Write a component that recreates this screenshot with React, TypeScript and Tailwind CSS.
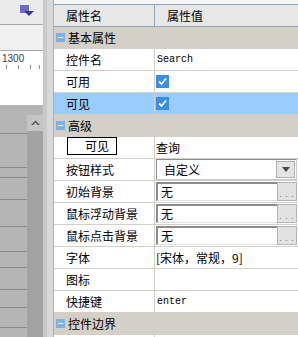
import { ReactNode } from "react";

const cjk = { fontFamily: '"Noto Sans CJK SC", "Liberation Sans", sans-serif' };

function Check() {
  return (
    <div className="w-[13px] h-[13px] bg-[#3c8de6] flex items-center justify-center">
      <svg width="11" height="11" viewBox="0 0 11 11">
        <path d="M2 5.5 L4.5 8 L9 2.5" stroke="white" strokeWidth="1.8" fill="none" />
      </svg>
    </div>
  );
}

function Row({ name, children, selected }: { name: ReactNode; children?: ReactNode; selected?: boolean }) {
  return (
    <div className={selected ? "flex h-[22px] border-b border-[#d4d0c8] bg-[#99ccff]" : "flex h-[22px] border-b border-[#d4d0c8] bg-white"}>
      <div className="w-[101px] shrink-0 flex items-center pl-[12px] border-r border-[#d4d0c8] text-[12px] text-black">
        {name}
      </div>
      <div className="flex-1 flex items-center pl-[1px] text-[12px] text-black">{children}</div>
    </div>
  );
}

function Category({ title }: { title: string }) {
  return (
    <div className="flex h-[22px] items-center bg-[#d4d0c8] border-b border-[#d4d0c8] text-[12px] text-black">
      <div className="ml-[2px] w-[9px] h-[9px] bg-[#7eb0e6] flex items-center justify-center">
        <div className="w-[5px] h-[1px] bg-white" />
      </div>
      <span className="ml-[3px]">{title}</span>
    </div>
  );
}

function PickField({ value }: { value: string }) {
  return (
    <div className="flex h-[19px] w-full mr-[1px]">
      <div className="flex-1 flex items-center bg-white border-t-2 border-l-2 border-[#8c8c8c] border-b border-r-0 border-b-[#e0e0e0] pl-[3px]">
        {value}
      </div>
      <div className="w-[20px] bg-[#e2e2e2] border border-[#b4b4b4] flex items-end justify-center pb-[1px]">
        <span className="text-[8px] leading-[8px] tracking-[1px] text-[#9a5c8e]" style={{ fontFamily: '"Liberation Mono", monospace' }}>...</span>
      </div>
    </div>
  );
}

export default function App() {
  const mono = { fontFamily: '"Liberation Mono", "DejaVu Sans Mono", monospace' };
  return (
    <div className="flex w-[298px] h-[337px] overflow-hidden bg-white" style={cjk}>
      {/* left canvas area */}
      <div className="w-[43px] shrink-0 flex flex-col">
        <div className="h-[25px] bg-[#ebebeb] border-b border-[#a8a8a8] relative">
          <div className="ml-[20px] mt-[5px] w-[9px] h-[8px] bg-[#6c6cc8]" />
          <svg className="absolute left-[24px] top-[11px]" width="10" height="5" viewBox="0 0 10 5">
            <path d="M0 0 H10 L5 5 Z" fill="#3a3a9a" />
          </svg>
        </div>
        <div className="h-[26px] bg-[#f1f1f1] border-b border-[#a8a8a8]" />
        <div className="h-[54px] bg-white flex flex-col">
          <div className="pl-[2px] pt-[3px] text-[10px] leading-[10px] text-[#404040]" style={{ fontFamily: '"Liberation Sans", sans-serif' }}>
            1300
          </div>
          <div className="flex h-[4px] mt-[1px]">
            <div className="ml-[6px] w-[1px] h-full bg-[#909090]" />
            <div className="ml-[11px] w-[1px] h-full bg-[#909090]" />
            <div className="ml-[11px] w-[1px] h-full bg-[#909090]" />
            <div className="ml-[8px] w-[1px] h-full bg-[#909090]" />
          </div>
        </div>
        <div className="flex-1 flex flex-col bg-[#b5b5b5]">
          <div className="h-[10px]" />
          <div className="flex flex-1">
            <div className="w-[27px] flex flex-col">
              <div className="h-[19px] border-b border-[#8a8a8a]" />
              <div className="h-[34px] border-b border-[#8a8a8a]" />
              <div className="h-[10px] border-b border-[#8a8a8a]" />
              <div className="h-[22px] border-b border-[#8a8a8a]" />
              <div className="h-[27px] border-b border-[#8a8a8a]" />
              <div className="h-[25px] border-b border-[#8a8a8a]" />
              <div className="h-[16px] border-b border-[#8a8a8a]" />
              <div className="h-[22px] border-b border-[#8a8a8a]" />
              <div className="h-[18px] border-b border-[#8a8a8a]" />
              <div className="h-[20px] border-b border-[#8a8a8a]" />
            </div>
            <div className="flex-1 flex flex-col bg-[#a3a3a3]">
              <div className="h-[16px] bg-[#c4c4c4] flex items-center justify-center">
                <svg width="9" height="6" viewBox="0 0 9 6">
                  <path d="M0 5 L4.5 0.5 L9 5 L7 5 L4.5 2.5 L2 5 Z" fill="#505050" />
                </svg>
              </div>
            </div>
          </div>
        </div>
      </div>

      {/* splitter */}
      <div className="w-[4px] shrink-0 bg-[#c9c9c9]" />
      <div className="w-[6px] shrink-0 bg-[#d8d8d8]" />

      {/* property grid */}
      <div className="flex-1 flex flex-col border-l border-[#9fb2cc] pt-[4px] bg-[#f6f6f6]">
        <div className="flex h-[23px] bg-[#e7e7e7] border-t border-b border-[#8fa3bd] text-[12px] text-black">
          <div className="w-[101px] shrink-0 flex items-center pl-[12px] border-r border-[#8fa3bd]">属性名</div>
          <div className="flex-1 flex items-center pl-[12px]">属性值</div>
        </div>

        <Category title="基本属性" />
        <Row name="控件名">
          <span className="text-[10px] pl-[1px]" style={mono}>Search</span>
        </Row>
        <Row name="可用">
          <Check />
        </Row>
        <Row name="可见" selected>
          <Check />
        </Row>

        <Category title="高级" />
        <div className="flex h-[22px] border-b border-[#d4d0c8] bg-white text-[12px] text-black">
          <div className="w-[101px] shrink-0 flex items-start pl-[13px] border-r border-[#d4d0c8]">
            <div className="w-[50px] h-[18px] border border-black bg-white flex items-center pl-[17px]">可见</div>
          </div>
          <div className="flex-1 flex items-center pl-[1px]">查询</div>
        </div>
        <Row name="按钮样式">
          <div className="flex h-[21px] w-full mr-[1px] border-t border-l border-[#8c8c8c] border-b border-r border-b-[#c8c8c8] border-r-[#c8c8c8] bg-white">
            <div className="flex-1 flex items-center pl-[7px]">自定义</div>
            <div className="w-[19px] my-[1px] mr-[1px] bg-[#e4e4e4] border border-[#b0b0b0] flex items-center justify-center">
              <svg width="8" height="5" viewBox="0 0 8 5">
                <path d="M0 0 H8 L4 5 Z" fill="#4a4a4a" />
              </svg>
            </div>
          </div>
        </Row>
        <Row name="初始背景">
          <PickField value="无" />
        </Row>
        <Row name="鼠标浮动背景">
          <PickField value="无" />
        </Row>
        <Row name="鼠标点击背景">
          <PickField value="无" />
        </Row>
        <Row name="字体">[宋体，常规，9]</Row>
        <Row name="图标" />
        <Row name="快捷键">
          <span className="text-[10px] pl-[1px]" style={mono}>enter</span>
        </Row>
        <Category title="控件边界" />
        <div className="flex flex-1 bg-white">
          <div className="w-[101px] border-r border-[#d4d0c8]" />
        </div>
      </div>
    </div>
  );
}
